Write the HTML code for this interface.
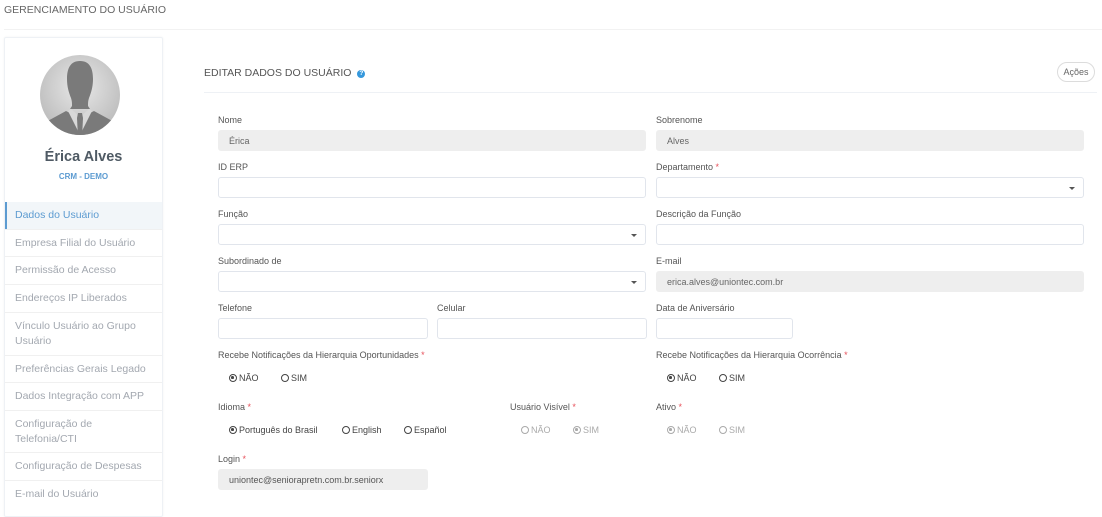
<!DOCTYPE html>
<html><head><meta charset="utf-8"><style>
*{box-sizing:border-box;margin:0;padding:0}
body{width:1102px;height:510px;background:#fff;font-family:"Liberation Sans",sans-serif;color:#555;position:relative;overflow:hidden;font-size:9px}
.a{position:absolute;white-space:nowrap}
.lbl{position:absolute;font-size:9px;color:#555;white-space:nowrap}
.req{color:#e7505a}
.in{position:absolute;height:21px;border:1px solid #e1e5ec;border-radius:3px;background:#fff;font-size:9px;color:#666;padding:5px 10px}
.in.g{background:#eee;border-color:#eee}
.car{position:absolute;right:8px;top:9px;width:0;height:0;border-left:3px solid transparent;border-right:3px solid transparent;border-top:3px solid #555}
.menu{position:absolute;left:5px;width:157px;border-top:1px solid #f0f0f0;font-size:10.5px;color:#a3a8b0;padding:0 10px;display:flex;align-items:center;line-height:15px}
.r{position:absolute;font-size:9px;color:#444;white-space:nowrap}
.r i{display:inline-block;width:8px;height:8px;border:1.5px solid #444;border-radius:50%;vertical-align:-1px;margin-right:2px;position:relative}
.r i.c::after{content:"";position:absolute;left:1.2px;top:1.2px;width:2.6px;height:2.6px;border-radius:50%;background:#444}
.r.d{color:#aaa}.r.d i{border-color:#aaa;border-width:1px}.r.d i.c::after{background:#aaa}
</style></head><body>
<div class="a" style="left:4px;top:4px;font-size:10.5px;color:#666">GERENCIAMENTO DO USUÁRIO</div>
<div class="a" style="left:4px;top:29px;width:1098px;height:1px;background:#f2f2f2"></div>
<div class="a" style="left:4px;top:37px;width:159px;height:480px;border:1px solid #eef1f5;border-radius:2px;box-shadow:0 0 2px rgba(0,0,0,.05)"></div>
<svg class="a" style="left:40px;top:55px" width="80" height="80" viewBox="0 0 80 80">
<defs><radialGradient id="g" cx="50%" cy="40%" r="60%"><stop offset="0" stop-color="#e8e8e8"/><stop offset="1" stop-color="#bcbcbc"/></radialGradient><clipPath id="cp"><circle cx="40" cy="40" r="40"/></clipPath></defs>
<circle cx="40" cy="40" r="40" fill="url(#g)"/>
<g clip-path="url(#cp)">
<path fill="#7a7a7a" d="M40 6c-10 0-13 8-13 18 0 8 2 14 4 19 1 3 1 5 1 8l-2 3h20l-2-3c0-3 0-5 1-8 2-5 4-11 4-19 0-10-3-18-13-18z"/>
<path fill="#7a7a7a" d="M4 68l22-12 12 6v20H0z M76 68L54 56l-12 6v20h40z"/>
<path fill="#d8d8d8" d="M31 54l9 8 9-8 3 2-12 24-12-24z"/>
<path fill="#7a7a7a" d="M38 58h4l1 5-1 20h-4l-1-20z"/>
</g></svg>
<div class="a" style="left:4px;top:149px;width:159px;text-align:center;font-size:14.5px;color:#4f5a64;font-weight:600">Érica Alves</div>
<div class="a" style="left:4px;top:172px;width:159px;text-align:center;font-size:8px;color:#5c9bd1;font-weight:bold">CRM - DEMO</div>
<div class="menu" style="top:202px;height:27px;background:#f2f6f9;border-left:2px solid #5c9bd1;color:#5c9bd1;padding-left:8px;border-top:none">Dados do Usuário</div>
<div class="menu" style="top:229px;height:27px">Empresa Filial do Usuário</div>
<div class="menu" style="top:256px;height:28px">Permissão de Acesso</div>
<div class="menu" style="top:284px;height:28px">Endereços IP Liberados</div>
<div class="menu" style="top:312px;height:43px">Vínculo Usuário ao Grupo<br>Usuário</div>
<div class="menu" style="top:355px;height:27px">Preferências Gerais Legado</div>
<div class="menu" style="top:382px;height:28px">Dados Integração com APP</div>
<div class="menu" style="top:410px;height:42px">Configuração de<br>Telefonia/CTI</div>
<div class="menu" style="top:452px;height:28px">Configuração de Despesas</div>
<div class="menu" style="top:480px;height:28px">E-mail do Usuário</div>

<div class="a" style="left:204px;top:67px;font-size:10.5px;color:#555">EDITAR DADOS DO USUÁRIO <span style="display:inline-block;width:8px;height:8px;border-radius:50%;background:#3598dc;color:#fff;font-size:6.5px;text-align:center;line-height:8px;font-weight:bold;vertical-align:1px;margin-left:3px">?</span></div>
<div class="a" style="left:1057px;top:62px;width:38px;height:20px;border:1px solid #dcdcdc;border-radius:10px;font-size:9px;color:#666;text-align:center;line-height:18px">Ações</div>
<div class="a" style="left:204px;top:92px;width:893px;height:1px;background:#eef1f5"></div>

<div class="lbl" style="left:218px;top:115px">Nome</div>
<div class="in g" style="left:218px;top:130px;width:428px">Érica</div>
<div class="lbl" style="left:656px;top:115px">Sobrenome</div>
<div class="in g" style="left:656px;top:130px;width:428px">Alves</div>

<div class="lbl" style="left:218px;top:162px">ID ERP</div>
<div class="in" style="left:218px;top:177px;width:428px"></div>
<div class="lbl" style="left:656px;top:162px">Departamento <span class="req">*</span></div>
<div class="in" style="left:656px;top:177px;width:428px"><span class="car"></span></div>

<div class="lbl" style="left:218px;top:209px">Função</div>
<div class="in" style="left:218px;top:224px;width:428px"><span class="car"></span></div>
<div class="lbl" style="left:656px;top:209px">Descrição da Função</div>
<div class="in" style="left:656px;top:224px;width:428px"></div>

<div class="lbl" style="left:218px;top:256px">Subordinado de</div>
<div class="in" style="left:218px;top:271px;width:428px"><span class="car"></span></div>
<div class="lbl" style="left:656px;top:256px">E-mail</div>
<div class="in g" style="left:656px;top:271px;width:428px">erica.alves@uniontec.com.br</div>

<div class="lbl" style="left:218px;top:303px">Telefone</div>
<div class="in" style="left:218px;top:318px;width:210px"></div>
<div class="lbl" style="left:437px;top:303px">Celular</div>
<div class="in" style="left:437px;top:318px;width:210px"></div>
<div class="lbl" style="left:656px;top:303px">Data de Aniversário</div>
<div class="in" style="left:656px;top:318px;width:137px"></div>

<div class="lbl" style="left:218px;top:350px">Recebe Notificações da Hierarquia Oportunidades <span class="req">*</span></div>
<div class="r" style="left:229px;top:373px"><i class="c"></i>NÃO</div>
<div class="r" style="left:281px;top:373px"><i></i>SIM</div>
<div class="lbl" style="left:656px;top:350px">Recebe Notificações da Hierarquia Ocorrência <span class="req">*</span></div>
<div class="r" style="left:667px;top:373px"><i class="c"></i>NÃO</div>
<div class="r" style="left:719px;top:373px"><i></i>SIM</div>

<div class="lbl" style="left:218px;top:402px">Idioma <span class="req">*</span></div>
<div class="r" style="left:229px;top:425px"><i class="c"></i>Português do Brasil</div>
<div class="r" style="left:342px;top:425px"><i></i>English</div>
<div class="r" style="left:404px;top:425px"><i></i>Español</div>
<div class="lbl" style="left:510px;top:402px">Usuário Visível <span class="req">*</span></div>
<div class="r d" style="left:521px;top:425px"><i></i>NÃO</div>
<div class="r d" style="left:573px;top:425px"><i class="c"></i>SIM</div>
<div class="lbl" style="left:656px;top:402px">Ativo <span class="req">*</span></div>
<div class="r d" style="left:667px;top:425px"><i class="c"></i>NÃO</div>
<div class="r d" style="left:719px;top:425px"><i></i>SIM</div>

<div class="lbl" style="left:218px;top:454px">Login <span class="req">*</span></div>
<div class="in g" style="left:218px;top:469px;width:210px;color:#555">uniontec@seniorapretn.com.br.seniorx</div>
</body></html>
